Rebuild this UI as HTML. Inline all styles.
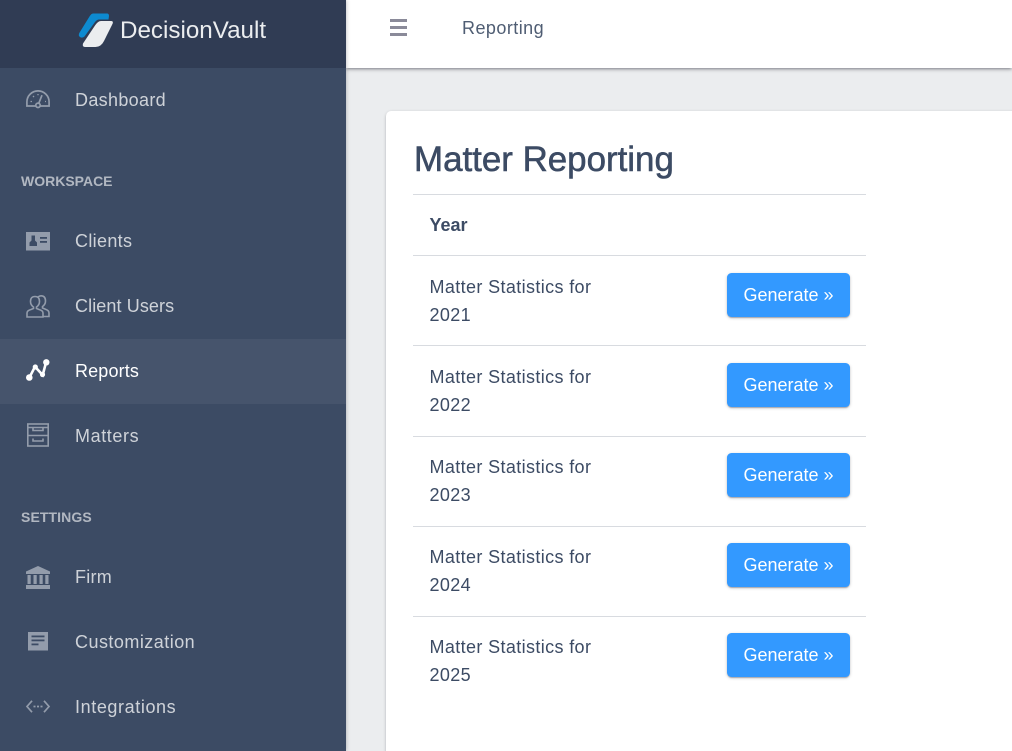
<!DOCTYPE html>
<html><head><meta charset="utf-8"><style>
html,body{margin:0;padding:0;width:1012px;height:751px;overflow:hidden;background:#ebedef;font-family:"Liberation Sans",sans-serif;}
#root{position:relative;width:1012px;height:751px;overflow:hidden;background:#ebedef;}
.a{position:absolute;white-space:nowrap;}
#side{position:absolute;left:0;top:0;width:346px;height:751px;background:#3c4b64;box-shadow:0 0 4px rgba(0,0,21,.3);}
#brand{position:absolute;left:0;top:0;width:346px;height:68px;background:#303c54;}
.nav{position:absolute;left:75px;font-size:18px;line-height:24px;color:rgba(255,255,255,.75);white-space:nowrap;}
.hd{position:absolute;left:21px;font-size:14px;line-height:18px;font-weight:bold;color:rgba(255,255,255,.6);}
svg{position:absolute;overflow:visible;}
.t{position:absolute;left:429.5px;font-size:18px;line-height:28px;color:#3c4b64;letter-spacing:.37px;white-space:nowrap;}
.b{position:absolute;left:727px;width:123px;height:44px;background:#39f;border-radius:4.5px;color:#fff;font-size:18px;line-height:44px;text-align:center;box-shadow:0 1px 1px rgba(0,0,21,.14),0 2px 1px -1px rgba(0,0,21,.12),0 1px 3px rgba(0,0,21,.2);}
.l{position:absolute;left:413px;width:453px;height:1px;background:#d8dbe0;}
</style></head><body><div id="root">
<div class="a" style="left:346px;top:0;width:666px;height:68px;background:#fff;box-shadow:0 2px 2px rgba(0,0,21,.14),0 3px 1px -2px rgba(0,0,21,.12),0 1px 5px rgba(0,0,21,.2);"></div>
<svg style="left:390px;top:19px" width="17" height="17"><rect x="0" y="0" width="17" height="3" fill="#8a8a99"/><rect x="0" y="7" width="17" height="3" fill="#8a8a99"/><rect x="0" y="14" width="17" height="3" fill="#8a8a99"/></svg>
<div class="a" style="left:462px;top:16px;font-size:18px;line-height:24px;color:#4f5d73;letter-spacing:.45px;">Reporting</div>

<div class="a" style="left:386px;top:111px;width:640px;height:650px;background:#fff;border-radius:5px;box-shadow:0 1px 1px rgba(0,0,21,.14),0 2px 1px -1px rgba(0,0,21,.12),0 1px 3px rgba(0,0,21,.2);"></div>
<div class="a" style="left:414px;top:139px;font-size:34.9px;line-height:42px;color:#3c4b64;-webkit-text-stroke:.55px #3c4b64;">Matter Reporting</div>
<div class="l" style="top:194px"></div>
<div class="a" style="left:429.5px;top:213px;font-size:18px;line-height:24px;font-weight:bold;color:#3c4b64;">Year</div>
<div class="l" style="top:255px"></div>
<div class="t" style="top:273px">Matter Statistics for<br>2021</div><div class="b" style="top:273px">Generate »</div>
<div class="l" style="top:345px"></div>
<div class="t" style="top:363px">Matter Statistics for<br>2022</div><div class="b" style="top:363px">Generate »</div>
<div class="l" style="top:436px"></div>
<div class="t" style="top:453px">Matter Statistics for<br>2023</div><div class="b" style="top:453px">Generate »</div>
<div class="l" style="top:526px"></div>
<div class="t" style="top:543px">Matter Statistics for<br>2024</div><div class="b" style="top:543px">Generate »</div>
<div class="l" style="top:616px"></div>
<div class="t" style="top:633px">Matter Statistics for<br>2025</div><div class="b" style="top:633px">Generate »</div>

<div id="side">
<div id="brand"></div>
<svg style="left:78px;top:13px" width="36" height="34" viewBox="0 0 36 34">
<path d="M15 .5 H29 Q31 .5 31 3 L30.500 6.500 H21 Q19 6.500 17 9 L6.500 23.500 Q4 25.500 2 24 Q0 22.500 1.300 20 L11.500 3.500 Q13.300 .5 15 .5Z" fill="#0d8ad0"/>
<path d="M23 8 H33 Q35.500 8 34.700 10.500 L26 28 Q23 34 17.500 34 H7 Q4 34 5 30.500 L17 12.500 Q20 8 23 8Z" fill="#ebedef"/>
</svg>
<div class="a" style="left:120px;top:15px;font-size:24.2px;line-height:32px;color:#ebedef;">DecisionVault</div>

<svg style="left:26px;top:90px" width="24" height="18" viewBox="0 0 24 18" fill="none" stroke="#939cab" stroke-width="1.700"><path d="M9.500 16 H.9 V12 A11.100 11.100 0 0 1 23.100 12 V16 H14.500"/><circle cx="12" cy="15.300" r="2.200"/><path d="M12.800 13.200 L16 5.200"/><path d="M4.500 11.500 H6 M7 6 L8 7 M12 4 V5.200 M19 11.500 H20" stroke-width="1.300"/></svg>
<div class="nav" style="top:88px;letter-spacing:.33px">Dashboard</div>

<div class="hd" style="top:172px">WORKSPACE</div>

<svg style="left:26px;top:232px" width="24" height="19" viewBox="0 0 24 19"><rect width="24" height="18.500" fill="#939cab"/><path d="M5.500 3.500 H9 V8.500 L11 10.500 V14 H3.500 V10.500 L5.500 8.500Z" fill="#3c4b64"/><rect x="14" y="5" width="7" height="1.800" fill="#3c4b64"/><rect x="14" y="9" width="7" height="1.800" fill="#3c4b64"/></svg>
<div class="nav" style="top:229px;letter-spacing:.33px">Clients</div>

<svg style="left:26px;top:295px" width="24" height="23" viewBox="0 0 24 23" fill="none" stroke="#939cab" stroke-width="1.600"><path d="M1 22 L1 18 Q1 15.500 5 14.500 L7.500 13.500 L7.500 12 Q4.500 10 4.500 6.500 Q4.500 1.500 9 1.500 Q13.500 1.500 13.500 6.500 Q13.500 10 10.500 12 L10.500 13.500 L13 14.500 Q17 15.500 17 18 L17 22Z"/><path d="M12 2 Q13.500 .8 15 .8 Q19.500 .8 19.500 6 Q19.500 9.500 16.500 11.500 L16.500 13 L20 14.500 Q23 15.500 23 18 L23 21.500 L17 21.500"/></svg>
<div class="nav" style="top:294px;letter-spacing:.1px">Client Users</div>

<div class="a" style="left:0;top:339px;width:346px;height:65px;background:#46546c;"></div>
<svg style="left:26px;top:359px" width="24" height="22" viewBox="0 0 24 22"><path d="M3.300 18.700 L9 7.700 L16.700 16 L20 3.700" fill="none" stroke="#fff" stroke-width="2.600"/><circle cx="3.300" cy="18.500" r="3.300" fill="#fff"/><circle cx="9.300" cy="8" r="2.600" fill="#fff"/><circle cx="16.500" cy="15.500" r="2.600" fill="#fff"/><circle cx="20.300" cy="3.300" r="3.200" fill="#fff"/></svg>
<div class="nav" style="top:359px;color:#fff;letter-spacing:.15px">Reports</div>

<svg style="left:27px;top:423px" width="22" height="24" viewBox="0 0 22 24" fill="none" stroke="#939cab" stroke-width="1.600"><rect x=".8" y="1" width="20.400" height="22"/><path d="M.8 4.500 H21.200 M.8 12.500 H21.200 M6 4.500 V7.500 H16 V4.500 M6 15.500 V18 H16 V15.500"/></svg>
<div class="nav" style="top:424px;letter-spacing:.6px">Matters</div>

<div class="hd" style="top:508px;letter-spacing:.1px">SETTINGS</div>

<svg style="left:26px;top:566px" width="24" height="23" viewBox="0 0 24 23" fill="#939cab"><path d="M12 0 L24 5.500 V8 H0 V5.500Z"/><rect x="1.500" y="9" width="3.200" height="9"/><rect x="7.500" y="9" width="3.200" height="9"/><rect x="13.500" y="9" width="3.200" height="9"/><rect x="19.300" y="9" width="3.200" height="9"/><rect x="0" y="19" width="24" height="4"/></svg>
<div class="nav" style="top:565px;letter-spacing:.25px">Firm</div>

<svg style="left:28px;top:632px" width="20" height="20" viewBox="0 0 20 20"><rect width="20" height="18.500" fill="#939cab"/><rect x="3.500" y="3.500" width="13" height="1.800" fill="#3c4b64"/><rect x="3.500" y="7.500" width="13" height="1.800" fill="#3c4b64"/><rect x="3.500" y="11.500" width="7" height="1.800" fill="#3c4b64"/></svg>
<div class="nav" style="top:630px;letter-spacing:.47px">Customization</div>

<svg style="left:26px;top:700px" width="24" height="14" viewBox="0 0 24 14" fill="none" stroke="#939cab" stroke-width="1.700"><path d="M6 .8 L1 6.500 L6 12.200 M18 .8 L23 6.500 L18 12.200"/><path d="M7.500 6.500 H17" stroke-dasharray="2 1.500"/></svg>
<div class="nav" style="top:695px;letter-spacing:.6px">Integrations</div>
</div>
</div></body></html>
